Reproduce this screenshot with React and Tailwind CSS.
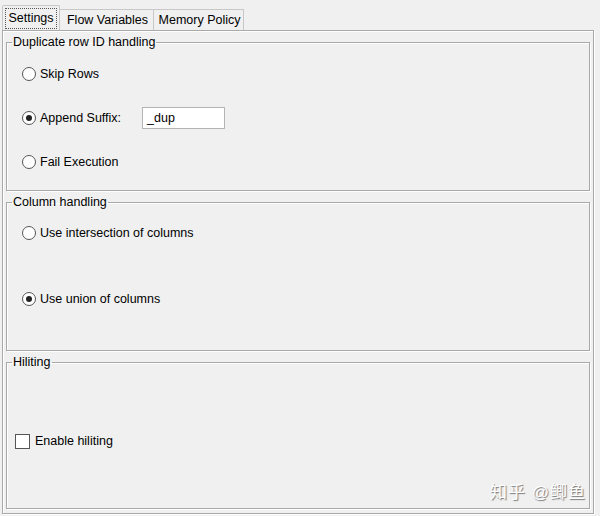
import React from 'react';

const font = { fontFamily: '"Liberation Sans", "Noto Sans CJK SC", sans-serif' };

const Radio = ({ checked, label }) => (
  <label className="flex items-center gap-[4px] text-[12.5px] text-black">
    <span className="flex h-[14px] w-[14px] items-center justify-center rounded-full border border-[#555] bg-white">
      {checked && <span className="h-[6px] w-[6px] rounded-full bg-[#222]" />}
    </span>
    {label}
  </label>
);

const Group = ({ title, className, children }) => (
  <fieldset
    className={`mx-[3px] border border-[#a9a9a9] shadow-[inset_1px_1px_0_#fff,1px_1px_0_#fff] ${className}`}
  >
    <legend className="ml-[5px] px-[1px] text-[12.5px] leading-[14px] text-black">{title}</legend>
    {children}
  </fieldset>
);

export default function App() {
  return (
    <div className="relative h-[516px] w-[600px] bg-[#f0f0f0] px-[2px] pt-[5px]" style={font}>
      {/* tabs */}
      <div className="flex items-end text-[12.5px] text-black">
        <div className="h-[25px] w-[58px] rounded-t-[2px] border border-b-0 border-[#c8c8c8] px-[2px] pt-[2px]">
          <div className="flex h-[21px] items-center justify-center border border-dotted border-[#555]">Settings</div>
        </div>
        <div className="flex h-[21px] w-[94px] items-center justify-center border border-b-0 border-l-0 border-[#c8c8c8] bg-[#f0f0f0] pl-[2px]">
          Flow Variables
        </div>
        <div className="flex h-[21px] w-[90px] items-center justify-center border border-b-0 border-l-0 border-[#c8c8c8] bg-[#f0f0f0] pl-[2px]">
          Memory Policy
        </div>
      </div>

      {/* panel */}
      <div className="flex h-[484px] w-[592px] flex-col gap-[4px] border border-[#a9a9a9] pt-[4px] shadow-[inset_1px_1px_0_#fff,1px_1px_0_#fff]">
        <Group title="Duplicate row ID handling" className="h-[156px]">
          <div className="flex flex-col gap-[22px] px-[15px] pt-[14px]">
            <div className="flex h-[22px] items-center">
              <Radio label="Skip Rows" />
            </div>
            <div className="flex h-[22px] items-center">
              <Radio checked label="Append Suffix:" />
              <div className="ml-[21px] flex h-[22px] w-[83px] items-center border border-[#b4b4b4] bg-white px-[4px] text-[12.5px] text-black">
                _dup
              </div>
            </div>
            <div className="flex h-[22px] items-center">
              <Radio label="Fail Execution" />
            </div>
          </div>
        </Group>

        <Group title="Column handling" className="h-[156px]">
          <div className="flex flex-col gap-[46px] px-[15px] pt-[14px]">
            <div className="flex h-[20px] items-center">
              <Radio label="Use intersection of columns" />
            </div>
            <div className="flex h-[20px] items-center">
              <Radio checked label="Use union of columns" />
            </div>
          </div>
        </Group>

        <Group title="Hiliting" className="h-[154px]">
          <div className="px-[8px] pt-[62px]">
            <label className="flex h-[20px] items-center gap-[5px] text-[12.5px] text-black">
              <span className="h-[15px] w-[15px] border border-[#555] bg-white" />
              Enable hiliting
            </label>
          </div>
        </Group>
      </div>

      {/* watermark */}
      <div className="absolute left-[490px] top-[480px] text-[17px] tracking-[1px] text-white [text-shadow:1px_1px_1px_#777]">
        知乎 @鲫鱼
      </div>
    </div>
  );
}
